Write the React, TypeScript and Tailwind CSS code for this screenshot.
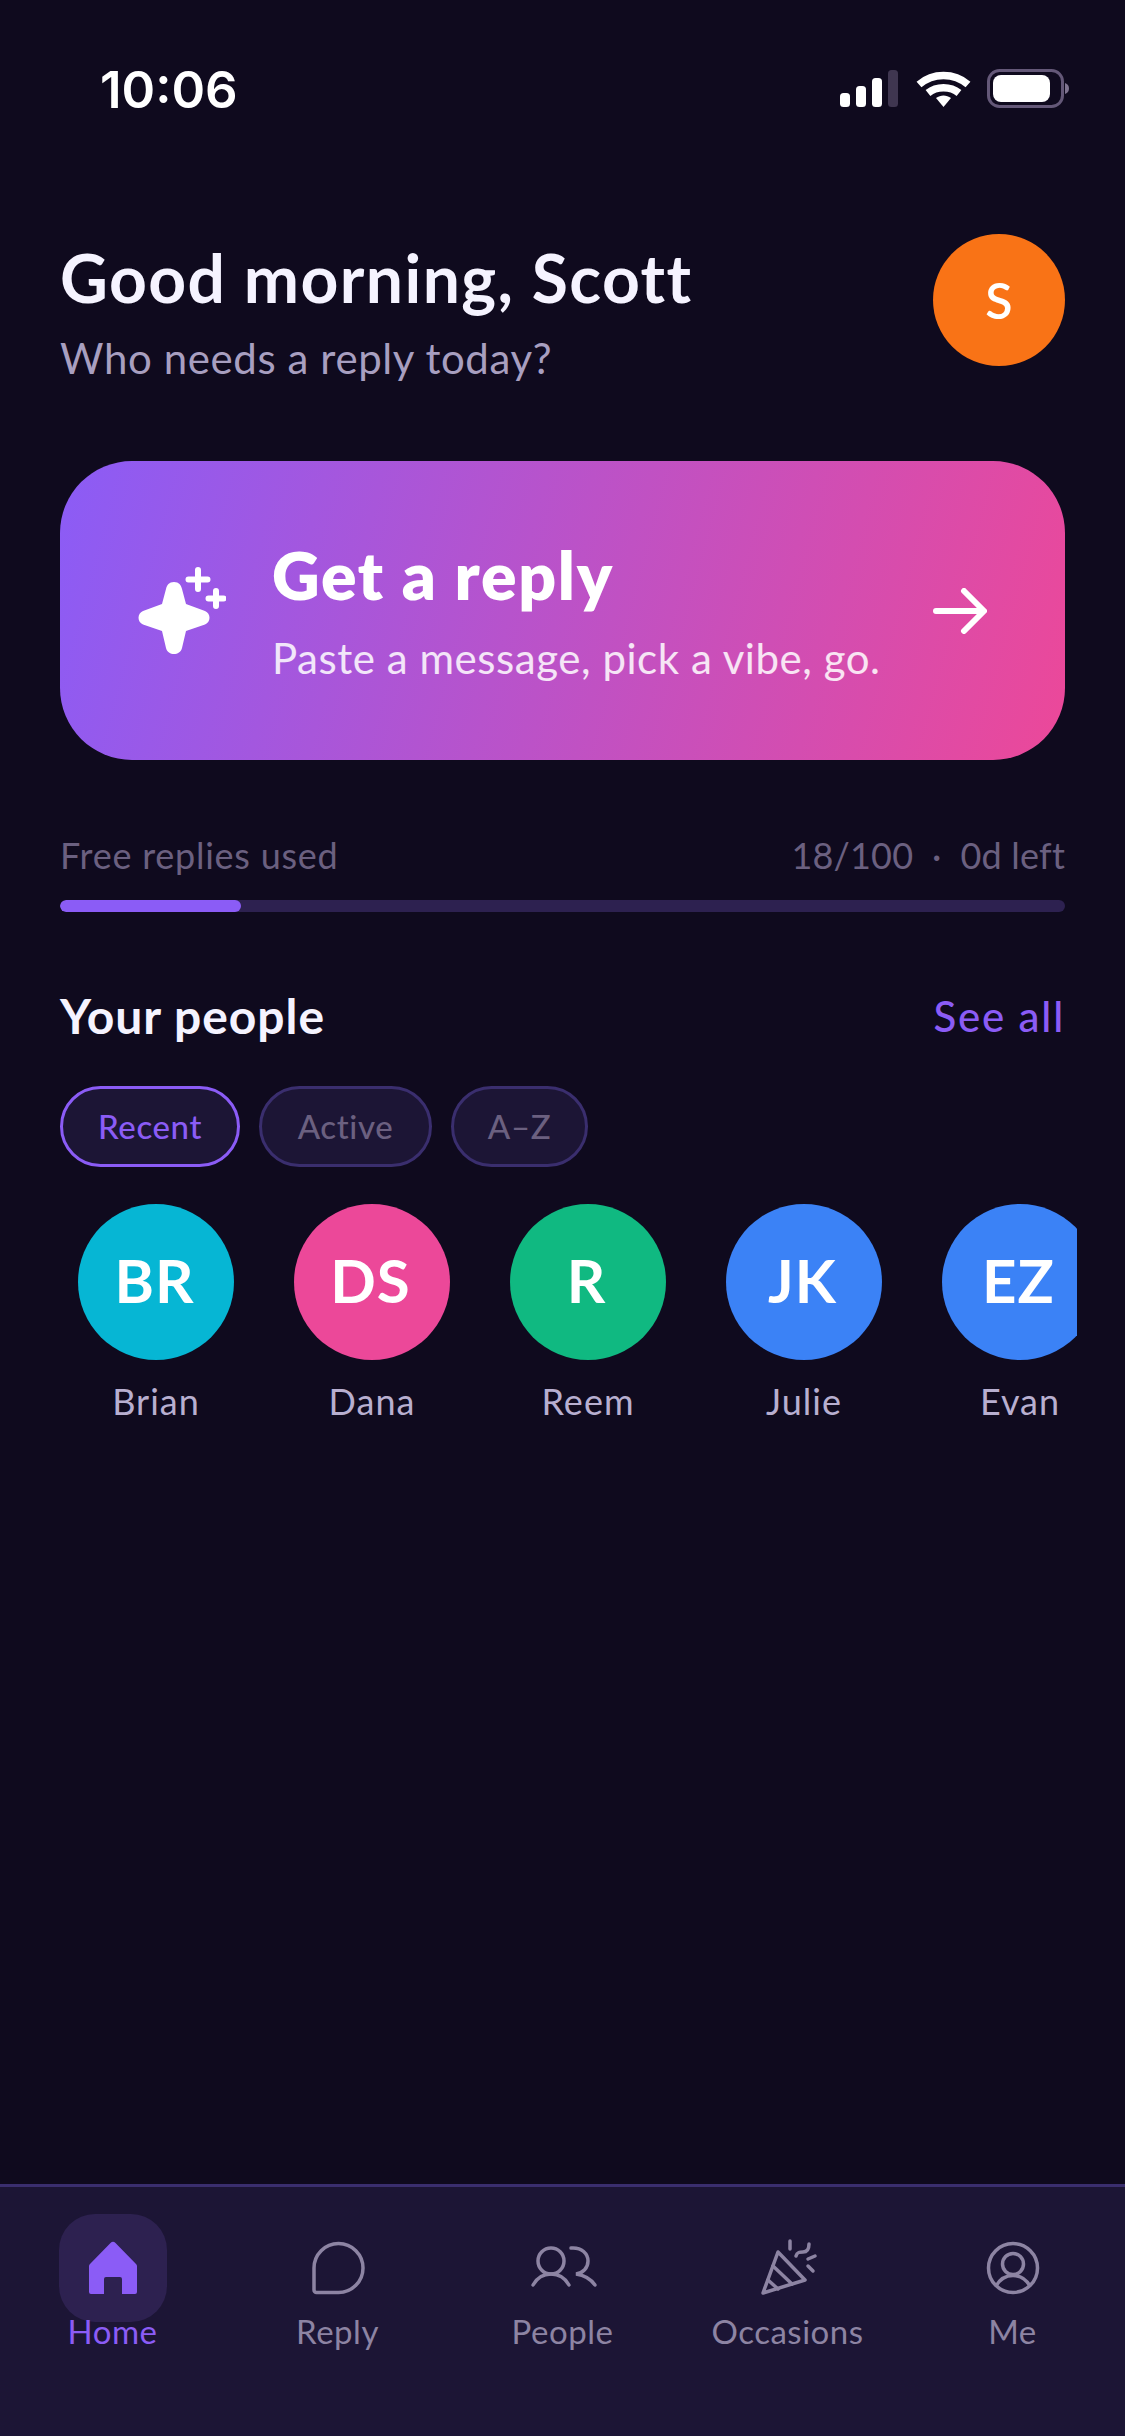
const people = [
  { initials: "BR", name: "Brian", color: "bg-[#06b6d4]" },
  { initials: "DS", name: "Dana", color: "bg-[#ec4899]" },
  { initials: "R", name: "Reem", color: "bg-[#10b981]" },
  { initials: "JK", name: "Julie", color: "bg-[#3b82f6]" },
  { initials: "EZ", name: "Evan", color: "bg-[#3b82f6]" },
];

const chips = [
  { label: "Recent", width: "w-[180px]", active: true },
  { label: "Active", width: "w-[173px]", active: false },
  { label: "A–Z", width: "w-[137px]", active: false },
];

function StatusIcons() {
  return (
    <svg width="232" height="42" viewBox="0 0 232 42" className="block">
      <g fill="#ffffff">
        <rect x="3" y="25" width="10" height="14" rx="3.5" />
        <rect x="19" y="18" width="10" height="21" rx="3.5" />
        <rect x="35" y="10" width="10" height="29" rx="3.5" />
      </g>
      <rect x="51" y="2" width="10" height="37" rx="3.5" fill="#3f3650" />
      <g fill="none" stroke="#ffffff" strokeWidth="7.5">
        <path d="M82 16.5 C96 4.5 117 4.5 131 16.5" />
        <path d="M91 25 C99.5 18 113.5 18 122 25" />
      </g>
      <path d="M99 30 C103.5 26.5 109.5 26.5 114 30 L106.5 39 Z" fill="#ffffff" />
      <rect x="151.5" y="2.5" width="74" height="36" rx="11" fill="none" stroke="#645878" strokeWidth="3" />
      <rect x="156" y="7" width="57" height="27" rx="8" fill="#ffffff" />
      <path d="M228 15 C231 16 232 18 232 20.5 C232 23 231 25 228 26 Z" fill="#7f7490" />
    </svg>
  );
}

function SparkleIcon() {
  return (
    <svg width="96" height="90" viewBox="0 0 96 90" className="shrink-0" fill="#ffffff">
      <path d="M44 16 C49 16 51 19 52 23 L56 38 L75 45 C81 47.5 81 56 75 58.5 L56 65 L52 82 C50 90 38 90 36 82 L32 65 L13 58.5 C7 56 7 47.5 13 45 L32 38 L36 23 C37 19 39 16 44 16 Z" />
      <g stroke="#ffffff" strokeWidth="6" strokeLinecap="round">
        <path d="M68 4 V23 M58.5 13.5 H77.5" />
        <path d="M86 25 V40 M78.5 32.5 H93.5" />
      </g>
    </svg>
  );
}

function ArrowIcon() {
  return (
    <svg width="54" height="46" viewBox="0 0 54 46" fill="none" stroke="#ffffff" strokeWidth="6" strokeLinecap="round" strokeLinejoin="round" className="shrink-0">
      <path d="M3 23 H50 M31 3 L51 23 L31 43" />
    </svg>
  );
}

function HomeIcon() {
  return (
    <svg width="60" height="60" viewBox="0 0 60 60" fill="#8b5cf6">
      <path d="M27.5 5 a3.5 3.5 0 0 1 5 0 L53 26 a3 3 0 0 1 1 2.5 V54 a2 2 0 0 1 -2 2 H39 V41 a2 2 0 0 0 -2 -2 H23 a2 2 0 0 0 -2 2 V56 H8 a2 2 0 0 1 -2 -2 V28.5 a3 3 0 0 1 1 -2.5 Z" />
    </svg>
  );
}

function ReplyIcon() {
  return (
    <svg width="60" height="60" viewBox="0 0 60 60" fill="none" stroke="#8d84a3" strokeWidth="3.5">
      <path d="M6 30 a24.5 24.5 0 1 1 24.5 24.5 H8.5 a2.5 2.5 0 0 1 -2.5 -2.5 Z" />
    </svg>
  );
}

function PeopleIcon() {
  return (
    <svg width="70" height="60" viewBox="0 0 70 60" fill="none" stroke="#8d84a3" strokeWidth="3.5" strokeLinecap="round">
      <circle cx="23" cy="23" r="13" />
      <path d="M5 47 C10 38 17 36 23 36 C29 36 36 38 41 47" />
      <path d="M43 10 C54 9 60 16 60 23 C60 30 55 35 48 36 C55 37 62 40 67 47" />
    </svg>
  );
}

function OccasionsIcon() {
  return (
    <svg width="60" height="60" viewBox="0 0 60 60" fill="none" stroke="#8d84a3" strokeWidth="3.5" strokeLinecap="round" strokeLinejoin="round">
      <path d="M5 55 L20 14 L47 42 Z" />
      <path d="M15 28 L34 46 M10 42 L20 51" />
      <path d="M32 3 V11" />
      <path d="M38 18 C39 14 42 14 45 14 C49 14 51 11 51 6" />
      <path d="M50 21 L57 18 M50 28 L55 33" />
    </svg>
  );
}

function MeIcon() {
  return (
    <svg width="60" height="60" viewBox="0 0 60 60" fill="none" stroke="#8d84a3" strokeWidth="3.5">
      <circle cx="30" cy="30" r="24.5" />
      <circle cx="30" cy="26" r="10.5" />
      <path d="M13 48 C17 41 23 37.5 30 37.5 C37 37.5 43 41 47 48" />
    </svg>
  );
}

const tabs = [
  { label: "Home", icon: <HomeIcon />, active: true },
  { label: "Reply", icon: <ReplyIcon />, active: false },
  { label: "People", icon: <PeopleIcon />, active: false },
  { label: "Occasions", icon: <OccasionsIcon />, active: false },
  { label: "Me", icon: <MeIcon />, active: false },
];

export default function App() {
  return (
    <div className="flex h-[2436px] w-[1125px] flex-col overflow-hidden bg-[#0f0a1e] font-['Lato','Liberation_Sans',sans-serif]">
      <div className="flex flex-1 flex-col">
        {/* status bar */}
        <div className="flex h-[132px] items-start justify-between pl-[100px] pr-[56px] pt-[62px]">
          <span className="font-['Inter',sans-serif] text-[51px] leading-[56px] font-semibold text-white">10:06</span>
          <div className="pt-[6px]">
            <StatusIcons />
          </div>
        </div>

        <div className="px-[60px]">
          {/* greeting */}
          <div className="mt-[102px] flex items-start justify-between">
            <div>
              <h1 className="text-[66px] leading-[88px] font-bold tracking-[1.4px] text-[#f5f3ff]">Good morning, Scott</h1>
              <p className="mt-[7px] text-[42px] leading-[58px] tracking-[0.6px] text-[#a89fc0]">Who needs a reply today?</p>
            </div>
            <div className="flex h-[132px] w-[132px] items-center justify-center rounded-full bg-[#f97316] text-[50px] font-semibold text-white">
              S
            </div>
          </div>

          {/* main action */}
          <div className="mt-[74px] flex h-[299px] items-center rounded-[72px] bg-[linear-gradient(105deg,#8b5cf6,#ec4899)] pl-[70px] pr-[78px]">
            <SparkleIcon />
            <div className="ml-[46px] flex-1">
              <div className="-mt-[2px] text-[66px] leading-[84px] font-extrabold tracking-[1.7px] text-white">Get a reply</div>
              <div className="mt-[12px] text-[42px] leading-[58px] tracking-[0.55px] text-white/85">Paste a message, pick a vibe, go.</div>
            </div>
            <ArrowIcon />
          </div>

          {/* usage */}
          <div className="mt-[70px] flex items-center justify-between text-[36px] leading-[50px] tracking-[0.75px] text-[#6b6080]">
            <span>Free replies used</span>
            <span className="tracking-[0.2px]">18/100 &nbsp;·&nbsp; 0d left</span>
          </div>
          <div className="mt-[20px] h-[12px] overflow-hidden rounded-full bg-[#2d2150]">
            <div className="h-full w-[18%] rounded-full bg-[#8b5cf6]" />
          </div>

          {/* people */}
          <div className="mt-[72px] flex items-center justify-between">
            <h2 className="text-[48px] leading-[64px] font-bold tracking-[1px] text-[#f5f3ff]">Your people</h2>
            <span className="text-[42px] leading-[64px] font-medium tracking-[1.8px] text-[#8b5cf6]">See all</span>
          </div>
          <div className="mt-[38px] flex gap-[19px]">
            {chips.map((c) => (
              <div
                key={c.label}
                className={
                  (c.active
                    ? "border-[#8b5cf6] text-[#8b5cf6] "
                    : "border-[#3a2e6e] text-[#6b6080] ") +
                  c.width +
                  " flex h-[81px] items-center justify-center rounded-full border-[3px] bg-[#1c1535] text-[33px] font-medium tracking-[0.6px]"
                }
              >
                {c.label}
              </div>
            ))}
          </div>
        </div>

        <div className="mx-[48px] mt-[37px] flex gap-[24px] overflow-hidden px-[12px]">
          {people.map((p) => (
            <div key={p.name} className="flex w-[192px] shrink-0 flex-col items-center">
              <div className={`flex h-[156px] w-[156px] items-center justify-center rounded-full pb-[4px] pr-[3px] ${p.color} text-[60px] font-bold tracking-[1px] text-white`}>
                {p.initials}
              </div>
              <span className="mt-[16px] text-[36px] leading-[50px] tracking-[1px] text-[#b8afd0]">{p.name}</span>
            </div>
          ))}
        </div>
      </div>

      {/* tab bar */}
      <div className="grid h-[252px] grid-cols-5 border-t-[3px] border-[#3a2e6e] bg-[#1c1535] pt-[27px]">
        {tabs.map((t) => (
          <div key={t.label} className="flex flex-col items-center">
            <div className={t.active ? "flex h-[108px] w-[108px] items-center justify-center rounded-[36px] bg-[#2d2150]" : "flex h-[108px] w-[108px] items-center justify-center"}>
              {t.icon}
            </div>
            <span className={t.active ? "relative -mt-[12px] text-[33px] leading-[42px] tracking-[0.5px] text-[#8b5cf6]" : "relative -mt-[12px] text-[33px] leading-[42px] tracking-[0.5px] text-[#8d84a3]"}>
              {t.label}
            </span>
          </div>
        ))}
      </div>
    </div>
  );
}
